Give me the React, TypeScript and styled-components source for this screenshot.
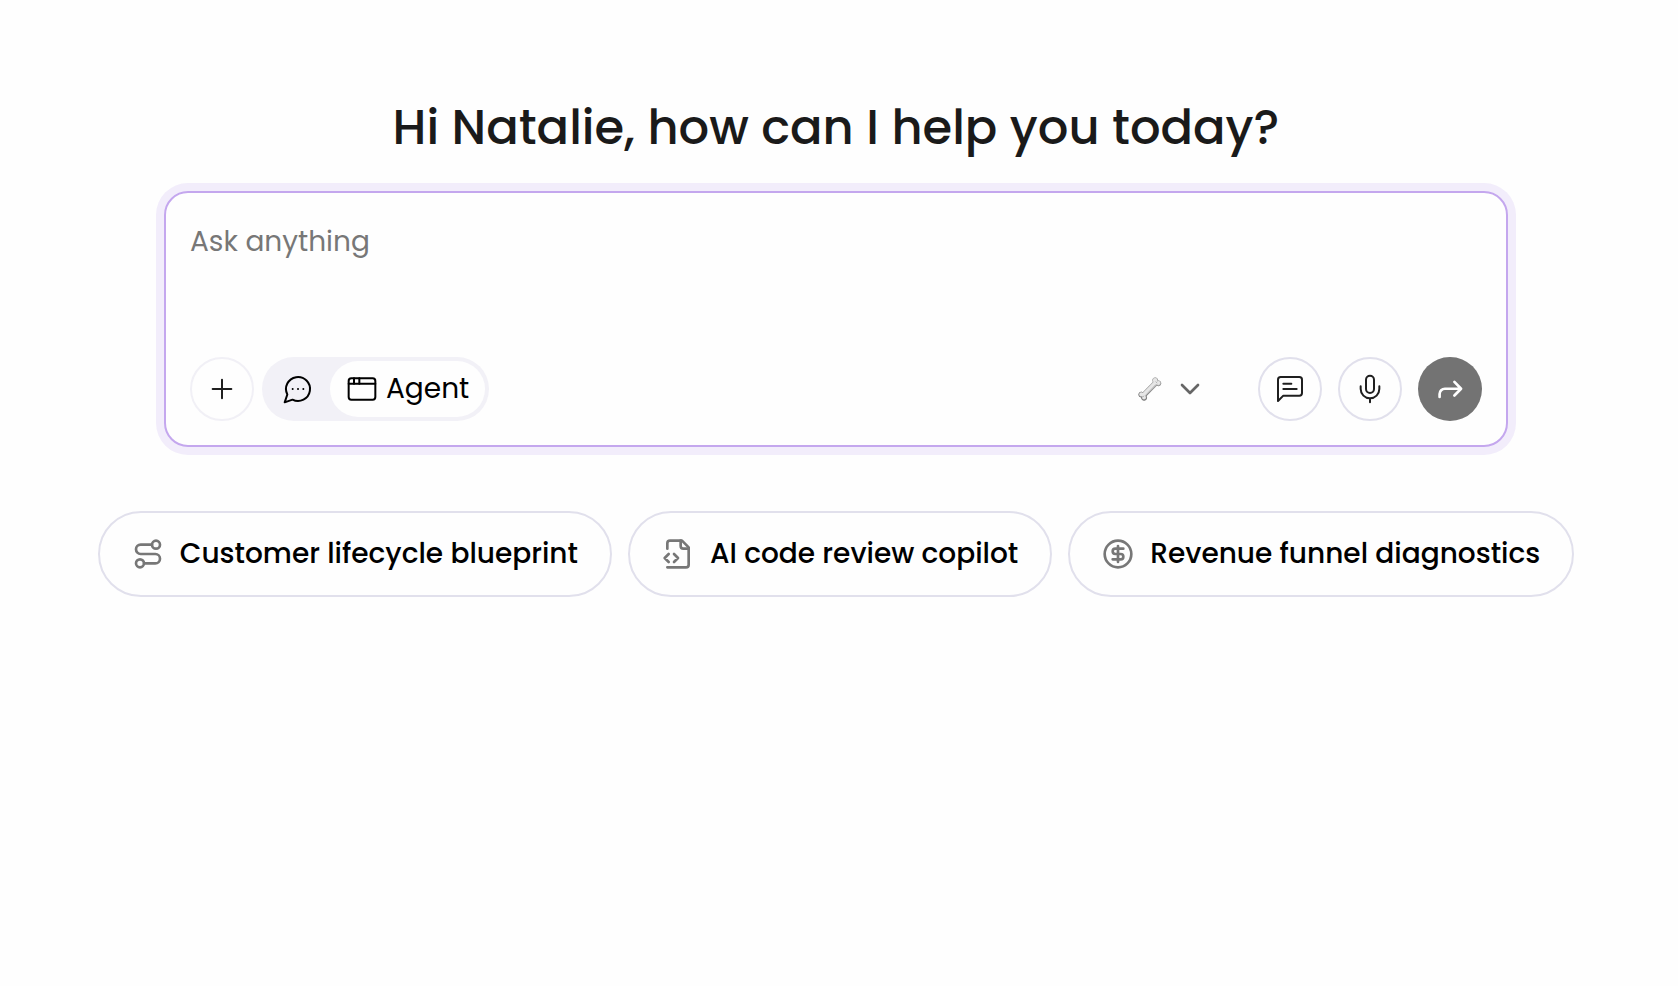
import React from "react";
import styled, { createGlobalStyle, css } from "styled-components";
import { AppWindow, ChevronDown, CircleDollarSign, Route } from "lucide-react";

const GlobalStyle = createGlobalStyle`
  *, *::before, *::after { box-sizing: border-box; }
  body {
    margin: 0;
    background: #fefefe;
    color: #000;
    font-family: Poppins, Inter, "Liberation Sans", sans-serif;
  }
  button, textarea { font: inherit; color: inherit; }
`;

const Page = styled.main`
  min-height: 100vh;
  padding: 92px 38px 64px 32px;
  display: flex;
  flex-direction: column;
  align-items: center;
`;

const Title = styled.h1`
  margin: 0 0 27px;
  font-size: 48px;
  line-height: 72px;
  font-weight: 500;
  color: #1a1a1a;
  text-align: center;
`;

const Composer = styled.form`
  width: 100%;
  max-width: 1344px;
  padding: 24px;
  border: 2px solid #c4a7ee;
  border-radius: 24px;
  background: #fefefe;
  box-shadow: 0 0 0 8px #f2edfb;
`;

const Prompt = styled.textarea`
  display: block;
  width: 100%;
  height: 100px;
  margin: 0 0 40px;
  padding: 0;
  border: 0;
  outline: 0;
  resize: none;
  background: transparent;
  font-size: 28px;
  line-height: 50px;
  &::placeholder { color: #777; opacity: 1; }
`;

const Toolbar = styled.div`
  display: flex;
  align-items: center;
  justify-content: space-between;
`;

const Tools = styled.div<{ $gap: number }>`
  display: flex;
  align-items: center;
  gap: ${(p) => p.$gap}px;
`;

const tones = {
  faint: css`background: transparent; border: 2px solid #f1f0f6; color: #1f1f1f;`,
  outline: css`background: transparent; border: 2px solid #e1e0ec; color: #1f1f1f;`,
  solid: css`background: #737373; border: 0; color: #fff;`,
};

const RoundButton = styled.button<{ $tone: keyof typeof tones }>`
  display: grid;
  place-items: center;
  width: 64px;
  height: 64px;
  padding: 0;
  border-radius: 50%;
  cursor: pointer;
  ${(p) => tones[p.$tone]}
`;

const ModeSwitch = styled.div`
  display: flex;
  height: 64px;
  padding: 4px;
  border-radius: 32px;
  background: #f2f1f7;
`;

const ModeButton = styled.button<{ $active?: boolean }>`
  display: flex;
  align-items: center;
  gap: 8px;
  padding: 0 16px;
  border: 0;
  border-radius: 28px;
  background: ${(p) => (p.$active ? "#fefefe" : "transparent")};
  font-size: 28px;
  line-height: 40px;
  cursor: pointer;
`;

const ModelPicker = styled.button`
  display: flex;
  align-items: center;
  gap: 12px;
  margin-right: 36px;
  padding: 0;
  border: 0;
  background: transparent;
  color: #666;
  cursor: pointer;
`;

const Suggestions = styled.div`
  display: flex;
  flex-wrap: wrap;
  justify-content: center;
  gap: 16px;
  width: 100%;
  margin-top: 64px;
`;

const Chip = styled.button`
  display: flex;
  align-items: center;
  gap: 16px;
  padding: 20px 32px;
  border: 2px solid #e1e0ec;
  border-radius: 43px;
  background: transparent;
  font-size: 28px;
  line-height: 42px;
  font-weight: 500;
  white-space: nowrap;
  cursor: pointer;
  svg { flex: none; color: #777; }
`;

const Icon = ({ width = 1.5, children }: { width?: number; children: React.ReactNode }) => (
  <svg
    width="32" height="32" viewBox="0 0 24 24" fill="none" stroke="currentColor"
    strokeWidth={width} strokeLinecap="round" strokeLinejoin="round" aria-hidden="true"
  >
    {children}
  </svg>
);

const Bone = () => (
  <svg width="24" height="24" viewBox="0 0 24 24" aria-hidden="true">
    <defs>
      <linearGradient id="boneEdge" x1="24" y1="0" x2="0" y2="24" gradientUnits="userSpaceOnUse">
        <stop offset="0" stopColor="#aaa" />
        <stop offset="1" stopColor="#6e6e6e" />
      </linearGradient>
    </defs>
    <g fill="url(#boneEdge)" stroke="url(#boneEdge)">
      <path d="M18.6 5 5 18.8" strokeWidth="5.4" />
      <g strokeWidth="1">
        <circle cx="17.2" cy="3.3" r="2.5" />
        <circle cx="20.4" cy="6.3" r="2.5" />
        <circle cx="3.3" cy="17.6" r="2.5" />
        <circle cx="6.1" cy="20.8" r="2.5" />
      </g>
    </g>
    <g fill="#e6e6e6">
      <path d="M18.4 4.8 4.8 18.6" stroke="#e6e6e6" strokeWidth="3.8" />
      <circle cx="17.1" cy="3.2" r="2.2" />
      <circle cx="20.3" cy="6" r="2.1" />
      <circle cx="3.3" cy="17.4" r="2.1" />
      <circle cx="6" cy="20.4" r="2" />
    </g>
    <path d="M18 7.4 8 17.8M4.6 20.2l1.6-1.4M17.6 4.6l1.6 1.6" stroke="#b4b4b4" strokeWidth="1" fill="none" />
  </svg>
);

export default function App() {
  return (
    <>
      <GlobalStyle />
      <Page>
        <Title>Hi Natalie, how can I help you today?</Title>

        <Composer onSubmit={(e) => e.preventDefault()}>
          <Prompt aria-label="Ask anything" placeholder="Ask anything" />
          <Toolbar>
            <Tools $gap={8}>
              <RoundButton type="button" $tone="faint" aria-label="Add attachment">
                <Icon><path d="M5 12h14M12 5v14" /></Icon>
              </RoundButton>
              <ModeSwitch role="group" aria-label="Mode">
                <ModeButton type="button" aria-label="Chat" aria-pressed={false}>
                  <Icon>
                    <path d="M7.9 20A9 9 0 1 0 4 16.1L2 22Z" />
                    <path d="M8 12h.01M12 12h.01M16 12h.01" />
                  </Icon>
                </ModeButton>
                <ModeButton type="button" $active aria-pressed>
                  <AppWindow size={32} strokeWidth={1.5} aria-hidden="true" />
                  Agent
                </ModeButton>
              </ModeSwitch>
            </Tools>

            <Tools $gap={16}>
              <ModelPicker type="button" aria-label="Choose model">
                <Bone />
                <ChevronDown size={32} strokeWidth={2} aria-hidden="true" />
              </ModelPicker>
              <RoundButton type="button" $tone="outline" aria-label="Prompts">
                <Icon>
                  <path d="M21 15a2 2 0 0 1-2 2H7l-4 4V5a2 2 0 0 1 2-2h14a2 2 0 0 1 2 2z" />
                  <path d="M13 8H7M17 12H7" />
                </Icon>
              </RoundButton>
              <RoundButton type="button" $tone="outline" aria-label="Voice input">
                <Icon>
                  <path d="M12 2a3 3 0 0 0-3 3v7a3 3 0 0 0 6 0V5a3 3 0 0 0-3-3Z" />
                  <path d="M19 10v2a7 7 0 0 1-14 0v-2M12 19v3" />
                </Icon>
              </RoundButton>
              <RoundButton type="submit" $tone="solid" aria-label="Send">
                <Icon width={2}>
                  <path d="M4.2 18v-2.2a4 4 0 0 1 4-4h12M15.3 6.7l5 5.1-5 5.1" />
                </Icon>
              </RoundButton>
            </Tools>
          </Toolbar>
        </Composer>

        <Suggestions>
          <Chip type="button">
            <Route size={32} aria-hidden="true" />
            Customer lifecycle blueprint
          </Chip>
          <Chip type="button">
            <Icon width={2}>
              <path d="M4 22h14a2 2 0 0 0 2-2V7l-5-5H6a2 2 0 0 0-2 2v4" />
              <path d="M14 2v4a2 2 0 0 0 2 2h4M5 12l-3 3 3 3M9 18l3-3-3-3" />
            </Icon>
            AI code review copilot
          </Chip>
          <Chip type="button">
            <CircleDollarSign size={32} aria-hidden="true" />
            Revenue funnel diagnostics
          </Chip>
        </Suggestions>
      </Page>
    </>
  );
}
